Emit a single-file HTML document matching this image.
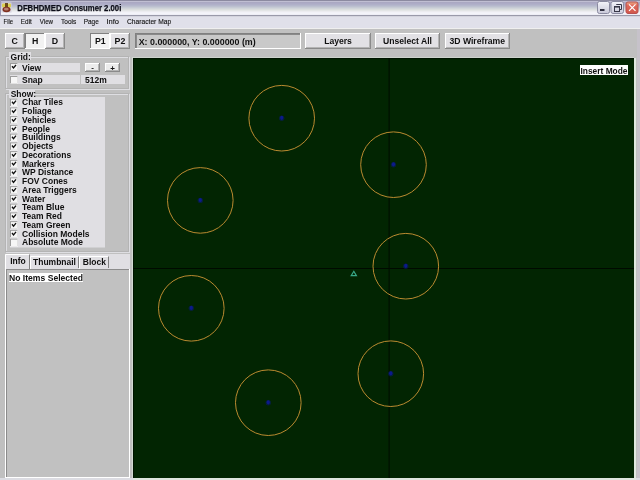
<!DOCTYPE html>
<html><head><meta charset="utf-8">
<style>
html,body{margin:0;padding:0;width:640px;height:480px;overflow:hidden;background:#c3c3c3;}
svg{display:block;will-change:transform;}
text{font-family:"Liberation Sans",sans-serif;}
</style></head>
<body>
<svg width="640" height="480" viewBox="0 0 640 480">
<defs>
<linearGradient id="tg" x1="0" y1="0" x2="0" y2="1">
<stop offset="0" stop-color="#8e8ca4"/>
<stop offset="0.08" stop-color="#b4b2ca"/>
<stop offset="0.35" stop-color="#b0b0c8"/>
<stop offset="0.62" stop-color="#cfd2da"/>
<stop offset="0.78" stop-color="#f2f2f8"/>
<stop offset="0.92" stop-color="#eeeef6"/>
<stop offset="1" stop-color="#a2a2b4"/>
</linearGradient>
<linearGradient id="bg1" x1="0" y1="0" x2="0" y2="1"><stop offset="0" stop-color="#f4f4fa"/><stop offset="1" stop-color="#c8c8d8"/></linearGradient>
<linearGradient id="bg2" x1="0" y1="0" x2="0" y2="1"><stop offset="0" stop-color="#ecb088"/><stop offset="0.3" stop-color="#e06a5c"/><stop offset="1" stop-color="#d0564a"/></linearGradient>
</defs>
<rect x="0" y="0" width="640" height="480" fill="#c0c0c0" />
<rect x="0" y="0" width="640" height="1" fill="#8c8aa0" />
<rect x="0" y="1" width="640" height="1" fill="#c0bed2" />
<rect x="0" y="2" width="640" height="1" fill="#aaa8c2" />
<rect x="0" y="3" width="640" height="1" fill="#adabc6" />
<rect x="0" y="4" width="640" height="1" fill="#b0b0c8" />
<rect x="0" y="5" width="640" height="1" fill="#b5b7cc" />
<rect x="0" y="6" width="640" height="1" fill="#bcc0cf" />
<rect x="0" y="7" width="640" height="1" fill="#c6cad4" />
<rect x="0" y="8" width="640" height="1" fill="#d0d4d9" />
<rect x="0" y="9" width="640" height="1" fill="#dadddd" />
<rect x="0" y="10" width="640" height="1" fill="#e3e5e6" />
<rect x="0" y="11" width="640" height="1" fill="#ececf0" />
<rect x="0" y="12" width="640" height="1" fill="#f2f2f8" />
<rect x="0" y="13" width="640" height="1" fill="#f4f4fa" />
<rect x="0" y="14" width="640" height="1" fill="#eeeef6" />
<rect x="0" y="15" width="640" height="1" fill="#9a9aaa" />
<rect x="0" y="0" width="1" height="16" fill="#9c98b4" />
<rect x="0" y="16" width="640" height="12" fill="#e0e0ea" />
<rect x="0" y="16" width="640" height="1" fill="#d4d4de" />
<rect x="0" y="28" width="640" height="1" fill="#efefef" />
<g><rect x="1.5" y="2.5" width="10" height="10" fill="#d8d4e0"/><rect x="2" y="3.5" width="3.5" height="4" rx="1" fill="#dcd050"/><rect x="8" y="3.5" width="3" height="4" rx="1" fill="#dcd050"/><rect x="5" y="3" width="3" height="5" fill="#6a4a18"/><ellipse cx="6.5" cy="9.5" rx="4" ry="2.8" fill="#803020"/><ellipse cx="6.3" cy="9.2" rx="2.4" ry="1.4" fill="#b88070"/></g>
<text x="17.3" y="11" font-size="9.4" fill="#0c0c18" font-weight="bold" stroke="#0c0c18" stroke-width="0.25" textLength="104" lengthAdjust="spacingAndGlyphs">DFBHDMED Consumer 2.00i</text>
<rect x="597.5" y="1.5" width="12" height="12" rx="2" fill="url(#bg1)" stroke="#8a8aa0" stroke-width="1"/>
<rect x="600" y="9" width="4.5" height="2" fill="#303040" />
<rect x="611" y="1.5" width="12.5" height="12" rx="2" fill="url(#bg1)" stroke="#8a8aa0" stroke-width="1"/>
<path d="M616.5 5 V4.5 H621.5 V9.5 H620" fill="none" stroke="#383848" stroke-width="1"/>
<rect x="614.5" y="7" width="5" height="4.5" fill="none" stroke="#383848" stroke-width="1"/>
<rect x="614" y="6" width="6" height="1.2" fill="#383848" />
<rect x="626" y="2" width="12" height="11.5" rx="2" fill="url(#bg2)" stroke="#b85050" stroke-width="1"/>
<path d="M629 4.3 L635.5 10.8 M635.5 4.3 L629 10.8" stroke="#ffffff" stroke-width="1.2"/>
<text x="3.6" y="24.1" font-size="7.4" fill="#101010" stroke="#101010" stroke-width="0.12" textLength="9.5" lengthAdjust="spacingAndGlyphs">File</text>
<text x="20.8" y="24.1" font-size="7.4" fill="#101010" stroke="#101010" stroke-width="0.12" textLength="11.1" lengthAdjust="spacingAndGlyphs">Edit</text>
<text x="39.8" y="24.1" font-size="7.4" fill="#101010" stroke="#101010" stroke-width="0.12" textLength="13.2" lengthAdjust="spacingAndGlyphs">View</text>
<text x="61" y="24.1" font-size="7.4" fill="#101010" stroke="#101010" stroke-width="0.12" textLength="15.3" lengthAdjust="spacingAndGlyphs">Tools</text>
<text x="83.7" y="24.1" font-size="7.4" fill="#101010" stroke="#101010" stroke-width="0.12" textLength="15.1" lengthAdjust="spacingAndGlyphs">Page</text>
<text x="106.4" y="24.1" font-size="7.4" fill="#101010" stroke="#101010" stroke-width="0.12" textLength="12.6" lengthAdjust="spacingAndGlyphs">Info</text>
<text x="127" y="24.1" font-size="7.4" fill="#101010" stroke="#101010" stroke-width="0.12" textLength="44.2" lengthAdjust="spacingAndGlyphs">Character Map</text>
<rect x="5" y="33" width="20" height="16" fill="#8a8a8a" />
<rect x="5" y="33" width="19" height="15" fill="#ffffff" />
<rect x="6" y="34" width="18" height="14" fill="#b4b4b4" />
<rect x="6" y="34" width="17" height="13" fill="#e2e1e5" />
<rect x="25" y="33" width="20" height="16" fill="#ffffff" />
<rect x="25" y="33" width="19" height="15" fill="#808080" />
<rect x="26" y="34" width="18" height="14" fill="#f2f2f2" />
<rect x="45" y="33" width="20" height="16" fill="#8a8a8a" />
<rect x="45" y="33" width="19" height="15" fill="#ffffff" />
<rect x="46" y="34" width="18" height="14" fill="#b4b4b4" />
<rect x="46" y="34" width="17" height="13" fill="#e2e1e5" />
<text x="14.8" y="43.8" font-size="8.8" fill="#101010" font-weight="bold" text-anchor="middle">C</text>
<text x="35.2" y="43.8" font-size="8.8" fill="#101010" font-weight="bold" text-anchor="middle">H</text>
<text x="55" y="43.8" font-size="8.8" fill="#101010" font-weight="bold" text-anchor="middle">D</text>
<rect x="90" y="33" width="20" height="16" fill="#ffffff" />
<rect x="90" y="33" width="19" height="15" fill="#808080" />
<rect x="91" y="34" width="18" height="14" fill="#f2f2f2" />
<rect x="110" y="33" width="20" height="16" fill="#8a8a8a" />
<rect x="110" y="33" width="19" height="15" fill="#ffffff" />
<rect x="111" y="34" width="18" height="14" fill="#b4b4b4" />
<rect x="111" y="34" width="17" height="13" fill="#e2e1e5" />
<text x="100.3" y="43.8" font-size="8.8" fill="#101010" font-weight="bold" text-anchor="middle">P1</text>
<text x="120" y="43.8" font-size="8.8" fill="#101010" font-weight="bold" text-anchor="middle">P2</text>
<rect x="135" y="33" width="166" height="16" fill="#ffffff" />
<rect x="135" y="33" width="165" height="15" fill="#808080" />
<rect x="136" y="34" width="164" height="14" fill="#a0a0a0" />
<rect x="136" y="34" width="164" height="14" fill="#c9c9c9" />
<rect x="136" y="34" width="164" height="1" fill="#8a8a8a" />
<rect x="136" y="34" width="1" height="14" fill="#8a8a8a" />
<text x="138.7" y="45" font-size="8.6" fill="#101010" font-weight="bold" textLength="117" lengthAdjust="spacingAndGlyphs">X: 0.000000, Y: 0.000000 (m)</text>
<rect x="305" y="33" width="66" height="16" fill="#8a8a8a" />
<rect x="305" y="33" width="65" height="15" fill="#ffffff" />
<rect x="306" y="34" width="64" height="14" fill="#b4b4b4" />
<rect x="306" y="34" width="63" height="13" fill="#e2e1e5" />
<rect x="375" y="33" width="65" height="16" fill="#8a8a8a" />
<rect x="375" y="33" width="64" height="15" fill="#ffffff" />
<rect x="376" y="34" width="63" height="14" fill="#b4b4b4" />
<rect x="376" y="34" width="62" height="13" fill="#e2e1e5" />
<rect x="445" y="33" width="65" height="16" fill="#8a8a8a" />
<rect x="445" y="33" width="64" height="15" fill="#ffffff" />
<rect x="446" y="34" width="63" height="14" fill="#b4b4b4" />
<rect x="446" y="34" width="62" height="13" fill="#e2e1e5" />
<text x="338" y="44" font-size="8.6" fill="#101010" font-weight="bold" text-anchor="middle">Layers</text>
<text x="407.5" y="44" font-size="8.6" fill="#101010" font-weight="bold" text-anchor="middle">Unselect All</text>
<text x="449.5" y="44" font-size="8.6" fill="#101010" font-weight="bold" textLength="55.5" lengthAdjust="spacingAndGlyphs">3D Wireframe</text>
<rect x="6.5" y="57.5" width="123" height="32" fill="none" stroke="#dedee2"/>
<rect x="5.5" y="56.5" width="123" height="32" fill="none" stroke="#b4b4b4"/>
<rect x="9" y="52" width="22" height="8" fill="#e0dfe3" />
<text x="10.6" y="59.8" font-size="9.2" fill="#101010" font-weight="bold" textLength="20.3" lengthAdjust="spacingAndGlyphs">Grid:</text>
<rect x="10" y="63" width="70" height="9" fill="#e0dfe3" />
<rect x="10" y="63" width="8" height="8" fill="#ffffff" />
<rect x="10" y="63" width="7.5" height="7.5" fill="#9c9c9c" />
<rect x="11" y="64" width="6.5" height="6.5" fill="#f6f6f6" />
<path d="M12 66.2 L13.5 68 L16 65" fill="none" stroke="#101010" stroke-width="1.35"/>
<text x="22" y="70.8" font-size="9.2" fill="#101010" font-weight="bold" textLength="19.22" lengthAdjust="spacingAndGlyphs">View</text>
<rect x="10" y="75" width="70" height="9" fill="#e0dfe3" />
<rect x="10" y="76" width="8" height="8" fill="#ffffff" />
<rect x="10" y="76" width="7.5" height="7.5" fill="#9c9c9c" />
<rect x="11" y="77" width="6.5" height="6.5" fill="#f6f6f6" />
<text x="22" y="82.8" font-size="9.2" fill="#101010" font-weight="bold" textLength="20.78" lengthAdjust="spacingAndGlyphs">Snap</text>
<rect x="85" y="63" width="15" height="9" fill="#8a8a8a" />
<rect x="85" y="63" width="14" height="8" fill="#ffffff" />
<rect x="86" y="64" width="13" height="7" fill="#b4b4b4" />
<rect x="86" y="64" width="12" height="6" fill="#ececec" />
<rect x="105" y="63" width="15" height="9" fill="#8a8a8a" />
<rect x="105" y="63" width="14" height="8" fill="#ffffff" />
<rect x="106" y="64" width="13" height="7" fill="#b4b4b4" />
<rect x="106" y="64" width="12" height="6" fill="#ececec" />
<text x="92.5" y="70" font-size="8" fill="#101010" font-weight="bold" text-anchor="middle">-</text>
<text x="112.5" y="70.5" font-size="8" fill="#101010" font-weight="bold" text-anchor="middle">+</text>
<rect x="81" y="75" width="44" height="9" fill="#e0dfe3" />
<text x="85" y="82.8" font-size="9.2" fill="#101010" font-weight="bold" textLength="21.74" lengthAdjust="spacingAndGlyphs">512m</text>
<rect x="6.5" y="94.5" width="123" height="158" fill="none" stroke="#dedee2"/>
<rect x="5.5" y="93.5" width="123" height="158" fill="none" stroke="#b4b4b4"/>
<rect x="9" y="90" width="26" height="8" fill="#e0dfe3" />
<text x="10.7" y="97.3" font-size="9.2" fill="#101010" font-weight="bold" textLength="25.5" lengthAdjust="spacingAndGlyphs">Show:</text>
<rect x="10" y="97" width="95" height="150.5" fill="#e0dfe3" />
<rect x="10" y="98.6" width="8" height="8" fill="#ffffff" />
<rect x="10" y="98.6" width="7.5" height="7.5" fill="#9c9c9c" />
<rect x="11" y="99.6" width="6.5" height="6.5" fill="#f6f6f6" />
<path d="M12 101.8 L13.5 103.6 L16 100.6" fill="none" stroke="#101010" stroke-width="1.35"/>
<text x="22" y="105.4" font-size="9.2" fill="#101010" font-weight="bold" textLength="40.94" lengthAdjust="spacingAndGlyphs">Char Tiles</text>
<rect x="10" y="107.35" width="8" height="8" fill="#ffffff" />
<rect x="10" y="107.35" width="7.5" height="7.5" fill="#9c9c9c" />
<rect x="11" y="108.35" width="6.5" height="6.5" fill="#f6f6f6" />
<path d="M12 110.55 L13.5 112.35 L16 109.35" fill="none" stroke="#101010" stroke-width="1.35"/>
<text x="22" y="114.15" font-size="9.2" fill="#101010" font-weight="bold" textLength="29.75" lengthAdjust="spacingAndGlyphs">Foliage</text>
<rect x="10" y="116.1" width="8" height="8" fill="#ffffff" />
<rect x="10" y="116.1" width="7.5" height="7.5" fill="#9c9c9c" />
<rect x="11" y="117.1" width="6.5" height="6.5" fill="#f6f6f6" />
<path d="M12 119.3 L13.5 121.1 L16 118.1" fill="none" stroke="#101010" stroke-width="1.35"/>
<text x="22" y="122.9" font-size="9.2" fill="#101010" font-weight="bold" textLength="34.02" lengthAdjust="spacingAndGlyphs">Vehicles</text>
<rect x="10" y="124.85" width="8" height="8" fill="#ffffff" />
<rect x="10" y="124.85" width="7.5" height="7.5" fill="#9c9c9c" />
<rect x="11" y="125.85" width="6.5" height="6.5" fill="#f6f6f6" />
<path d="M12 128.04999999999998 L13.5 129.85 L16 126.85" fill="none" stroke="#101010" stroke-width="1.35"/>
<text x="22" y="131.65" font-size="9.2" fill="#101010" font-weight="bold" textLength="27.87" lengthAdjust="spacingAndGlyphs">People</text>
<rect x="10" y="133.6" width="8" height="8" fill="#ffffff" />
<rect x="10" y="133.6" width="7.5" height="7.5" fill="#9c9c9c" />
<rect x="11" y="134.6" width="6.5" height="6.5" fill="#f6f6f6" />
<path d="M12 136.79999999999998 L13.5 138.6 L16 135.6" fill="none" stroke="#101010" stroke-width="1.35"/>
<text x="22" y="140.39999999999998" font-size="9.2" fill="#101010" font-weight="bold" textLength="38.72" lengthAdjust="spacingAndGlyphs">Buildings</text>
<rect x="10" y="142.35" width="8" height="8" fill="#ffffff" />
<rect x="10" y="142.35" width="7.5" height="7.5" fill="#9c9c9c" />
<rect x="11" y="143.35" width="6.5" height="6.5" fill="#f6f6f6" />
<path d="M12 145.54999999999998 L13.5 147.35 L16 144.35" fill="none" stroke="#101010" stroke-width="1.35"/>
<text x="22" y="149.14999999999998" font-size="9.2" fill="#101010" font-weight="bold" textLength="31.18" lengthAdjust="spacingAndGlyphs">Objects</text>
<rect x="10" y="151.1" width="8" height="8" fill="#ffffff" />
<rect x="10" y="151.1" width="7.5" height="7.5" fill="#9c9c9c" />
<rect x="11" y="152.1" width="6.5" height="6.5" fill="#f6f6f6" />
<path d="M12 154.29999999999998 L13.5 156.1 L16 153.1" fill="none" stroke="#101010" stroke-width="1.35"/>
<text x="22" y="157.89999999999998" font-size="9.2" fill="#101010" font-weight="bold" textLength="49.12" lengthAdjust="spacingAndGlyphs">Decorations</text>
<rect x="10" y="159.85" width="8" height="8" fill="#ffffff" />
<rect x="10" y="159.85" width="7.5" height="7.5" fill="#9c9c9c" />
<rect x="11" y="160.85" width="6.5" height="6.5" fill="#f6f6f6" />
<path d="M12 163.04999999999998 L13.5 164.85 L16 161.85" fill="none" stroke="#101010" stroke-width="1.35"/>
<text x="22" y="166.64999999999998" font-size="9.2" fill="#101010" font-weight="bold" textLength="32.61" lengthAdjust="spacingAndGlyphs">Markers</text>
<rect x="10" y="168.6" width="8" height="8" fill="#ffffff" />
<rect x="10" y="168.6" width="7.5" height="7.5" fill="#9c9c9c" />
<rect x="11" y="169.6" width="6.5" height="6.5" fill="#f6f6f6" />
<path d="M12 171.79999999999998 L13.5 173.6 L16 170.6" fill="none" stroke="#101010" stroke-width="1.35"/>
<text x="22" y="175.39999999999998" font-size="9.2" fill="#101010" font-weight="bold" textLength="51.33" lengthAdjust="spacingAndGlyphs">WP Distance</text>
<rect x="10" y="177.35" width="8" height="8" fill="#ffffff" />
<rect x="10" y="177.35" width="7.5" height="7.5" fill="#9c9c9c" />
<rect x="11" y="178.35" width="6.5" height="6.5" fill="#f6f6f6" />
<path d="M12 180.54999999999998 L13.5 182.35 L16 179.35" fill="none" stroke="#101010" stroke-width="1.35"/>
<text x="22" y="184.14999999999998" font-size="9.2" fill="#101010" font-weight="bold" textLength="45.81" lengthAdjust="spacingAndGlyphs">FOV Cones</text>
<rect x="10" y="186.1" width="8" height="8" fill="#ffffff" />
<rect x="10" y="186.1" width="7.5" height="7.5" fill="#9c9c9c" />
<rect x="11" y="187.1" width="6.5" height="6.5" fill="#f6f6f6" />
<path d="M12 189.29999999999998 L13.5 191.1 L16 188.1" fill="none" stroke="#101010" stroke-width="1.35"/>
<text x="22" y="192.89999999999998" font-size="9.2" fill="#101010" font-weight="bold" textLength="54.8" lengthAdjust="spacingAndGlyphs">Area Triggers</text>
<rect x="10" y="194.85" width="8" height="8" fill="#ffffff" />
<rect x="10" y="194.85" width="7.5" height="7.5" fill="#9c9c9c" />
<rect x="11" y="195.85" width="6.5" height="6.5" fill="#f6f6f6" />
<path d="M12 198.04999999999998 L13.5 199.85 L16 196.85" fill="none" stroke="#101010" stroke-width="1.35"/>
<text x="22" y="201.64999999999998" font-size="9.2" fill="#101010" font-weight="bold" textLength="23.3" lengthAdjust="spacingAndGlyphs">Water</text>
<rect x="10" y="203.6" width="8" height="8" fill="#ffffff" />
<rect x="10" y="203.6" width="7.5" height="7.5" fill="#9c9c9c" />
<rect x="11" y="204.6" width="6.5" height="6.5" fill="#f6f6f6" />
<path d="M12 206.79999999999998 L13.5 208.6 L16 205.6" fill="none" stroke="#101010" stroke-width="1.35"/>
<text x="22" y="210.39999999999998" font-size="9.2" fill="#101010" font-weight="bold" textLength="42.36" lengthAdjust="spacingAndGlyphs">Team Blue</text>
<rect x="10" y="212.35" width="8" height="8" fill="#ffffff" />
<rect x="10" y="212.35" width="7.5" height="7.5" fill="#9c9c9c" />
<rect x="11" y="213.35" width="6.5" height="6.5" fill="#f6f6f6" />
<path d="M12 215.54999999999998 L13.5 217.35 L16 214.35" fill="none" stroke="#101010" stroke-width="1.35"/>
<text x="22" y="219.14999999999998" font-size="9.2" fill="#101010" font-weight="bold" textLength="39.99" lengthAdjust="spacingAndGlyphs">Team Red</text>
<rect x="10" y="221.1" width="8" height="8" fill="#ffffff" />
<rect x="10" y="221.1" width="7.5" height="7.5" fill="#9c9c9c" />
<rect x="11" y="222.1" width="6.5" height="6.5" fill="#f6f6f6" />
<path d="M12 224.29999999999998 L13.5 226.1 L16 223.1" fill="none" stroke="#101010" stroke-width="1.35"/>
<text x="22" y="227.89999999999998" font-size="9.2" fill="#101010" font-weight="bold" textLength="48.5" lengthAdjust="spacingAndGlyphs">Team Green</text>
<rect x="10" y="229.85" width="8" height="8" fill="#ffffff" />
<rect x="10" y="229.85" width="7.5" height="7.5" fill="#9c9c9c" />
<rect x="11" y="230.85" width="6.5" height="6.5" fill="#f6f6f6" />
<path d="M12 233.04999999999998 L13.5 234.85 L16 231.85" fill="none" stroke="#101010" stroke-width="1.35"/>
<text x="22" y="236.64999999999998" font-size="9.2" fill="#101010" font-weight="bold" textLength="67.53" lengthAdjust="spacingAndGlyphs">Collision Models</text>
<rect x="10" y="238.6" width="8" height="8" fill="#ffffff" />
<rect x="10" y="238.6" width="7.5" height="7.5" fill="#9c9c9c" />
<rect x="11" y="239.6" width="6.5" height="6.5" fill="#f6f6f6" />
<text x="22" y="245.39999999999998" font-size="9.2" fill="#101010" font-weight="bold" textLength="60.92" lengthAdjust="spacingAndGlyphs">Absolute Mode</text>
<rect x="5" y="254" width="125" height="15" fill="#e0dfe3" />
<path d="M5.5 269 V254.5 H29.5" fill="none" stroke="#ffffff"/>
<path d="M29.5 254.5 V269" fill="none" stroke="#808080"/>
<text x="10.2" y="263.6" font-size="9.2" fill="#101010" font-weight="bold" textLength="15.58" lengthAdjust="spacingAndGlyphs">Info</text>
<path d="M30.5 269 V256.5 H78.5" fill="none" stroke="#ffffff"/>
<path d="M78.5 256.5 V268" fill="none" stroke="#808080"/>
<text x="33" y="264.8" font-size="9.2" fill="#101010" font-weight="bold" textLength="42.97" lengthAdjust="spacingAndGlyphs">Thumbnail</text>
<path d="M79.5 269 V256.5 H108.5" fill="none" stroke="#ffffff"/>
<path d="M108.5 256.5 V268" fill="none" stroke="#808080"/>
<text x="82.8" y="264.8" font-size="9.2" fill="#101010" font-weight="bold" textLength="23.15" lengthAdjust="spacingAndGlyphs">Block</text>
<rect x="5" y="269" width="125" height="209" fill="#ffffff" />
<rect x="6" y="269" width="123" height="208" fill="#8c8c8c" />
<rect x="7" y="270" width="122" height="207" fill="#c1c1c1" />
<rect x="9" y="273" width="74" height="9" fill="#ffffff" />
<text x="9" y="280.5" font-size="9.2" fill="#101010" font-weight="bold" textLength="74" lengthAdjust="spacingAndGlyphs">No Items Selected</text>
<rect x="133" y="58" width="501" height="420" fill="#022502" />
<rect x="634" y="58" width="2" height="420" fill="#e0e8e0" />
<rect x="132" y="57" width="1" height="421" fill="#d2dad2" />
<rect x="133" y="57" width="501" height="1" fill="#cdd3cd" />
<rect x="133" y="58" width="501" height="1" fill="#001400" />
<rect x="133" y="58" width="1" height="420" fill="#001400" />
<rect x="0" y="478" width="640" height="2" fill="#dcdce2" />
<rect x="133" y="478" width="503" height="2" fill="#dfe6df" />
<rect x="637" y="29" width="3" height="449" fill="#c6c2ca" />
<rect x="133" y="268" width="501" height="1" fill="#000a00" />
<rect x="388.6" y="58" width="1" height="420" fill="#000c00" />
<circle cx="281.7" cy="118.2" r="32.8" fill="none" stroke="#ba8a30" stroke-width="1"/>
<circle cx="281.7" cy="118.2" r="2.7" fill="#0a1c70" opacity="0.55"/>
<ellipse cx="281.7" cy="117.8" rx="1.6" ry="2.1" fill="#0c1a8c"/>
<circle cx="393.5" cy="164.7" r="32.8" fill="none" stroke="#ba8a30" stroke-width="1"/>
<circle cx="393.5" cy="164.7" r="2.7" fill="#0a1c70" opacity="0.55"/>
<ellipse cx="393.5" cy="164.29999999999998" rx="1.6" ry="2.1" fill="#0c1a8c"/>
<circle cx="200.3" cy="200.4" r="32.8" fill="none" stroke="#ba8a30" stroke-width="1"/>
<circle cx="200.3" cy="200.4" r="2.7" fill="#0a1c70" opacity="0.55"/>
<ellipse cx="200.3" cy="200.0" rx="1.6" ry="2.1" fill="#0c1a8c"/>
<circle cx="405.8" cy="266.2" r="32.8" fill="none" stroke="#ba8a30" stroke-width="1"/>
<circle cx="405.8" cy="266.2" r="2.7" fill="#0a1c70" opacity="0.55"/>
<ellipse cx="405.8" cy="265.8" rx="1.6" ry="2.1" fill="#0c1a8c"/>
<circle cx="191.3" cy="308.3" r="32.8" fill="none" stroke="#ba8a30" stroke-width="1"/>
<circle cx="191.3" cy="308.3" r="2.7" fill="#0a1c70" opacity="0.55"/>
<ellipse cx="191.3" cy="307.90000000000003" rx="1.6" ry="2.1" fill="#0c1a8c"/>
<circle cx="390.8" cy="373.7" r="32.8" fill="none" stroke="#ba8a30" stroke-width="1"/>
<circle cx="390.8" cy="373.7" r="2.7" fill="#0a1c70" opacity="0.55"/>
<ellipse cx="390.8" cy="373.3" rx="1.6" ry="2.1" fill="#0c1a8c"/>
<circle cx="268.3" cy="402.7" r="32.8" fill="none" stroke="#ba8a30" stroke-width="1"/>
<circle cx="268.3" cy="402.7" r="2.7" fill="#0a1c70" opacity="0.55"/>
<ellipse cx="268.3" cy="402.3" rx="1.6" ry="2.1" fill="#0c1a8c"/>
<path d="M353.8 271.3 L356.4 275.6 L351.2 275.6 Z" fill="none" stroke="#38a888" stroke-width="1.2"/>
<rect x="580" y="65" width="48" height="10" fill="#ffffff" />
<text x="580.5" y="73.6" font-size="9.2" fill="#101010" font-weight="bold" textLength="47" lengthAdjust="spacingAndGlyphs">Insert Mode</text>
</svg>
</body></html>
